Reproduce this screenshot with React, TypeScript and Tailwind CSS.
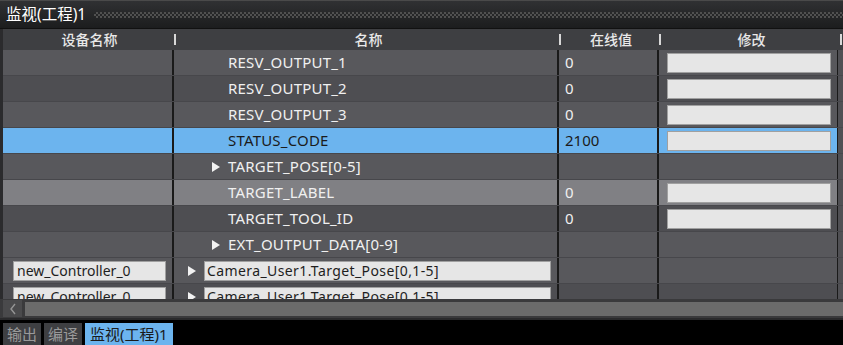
const font = "font-['Noto_Sans','Noto_Sans_CJK_SC',sans-serif]";

type Row = {
  name: string;
  value?: string;
  edit?: boolean;
  expand?: boolean;
  tone: "a" | "b" | "sel" | "hover";
};

const rows: Row[] = [
  { name: "RESV_OUTPUT_1", value: "0", edit: true, tone: "a" },
  { name: "RESV_OUTPUT_2", value: "0", edit: true, tone: "b" },
  { name: "RESV_OUTPUT_3", value: "0", edit: true, tone: "a" },
  { name: "STATUS_CODE", value: "2100", edit: true, tone: "sel" },
  { name: "TARGET_POSE[0-5]", expand: true, tone: "a" },
  { name: "TARGET_LABEL", value: "0", edit: true, tone: "hover" },
  { name: "TARGET_TOOL_ID", value: "0", edit: true, tone: "b" },
  { name: "EXT_OUTPUT_DATA[0-9]", expand: true, tone: "a" },
];

const toneBg = {
  a: "bg-[#58585c]",
  b: "bg-[#4e4e52]",
  sel: "bg-[#6cb4ee]",
  hover: "bg-[#808084]",
};

function Tri({ dark }: { dark?: boolean }) {
  return (
    <svg width="10" height="12" viewBox="0 0 10 12" className="shrink-0">
      <path d="M1 1 L9 6 L1 11 Z" fill={dark ? "#1b1b1b" : "#f2f2f2"} />
    </svg>
  );
}

function EditBox() {
  return <div className="h-[20px] ml-[8px] mr-[6px] bg-[#e6e6e6] border border-[#a0a0a0]" />;
}

function DataRow({ r }: { r: Row }) {
  const sel = r.tone === "sel";
  const txt = sel ? "text-[#1b1b1b]" : "text-[#f0f0f0]";
  return (
    <div className={`flex h-[26px] shrink-0 border-b border-[#47474b] text-[15px] ${toneBg[r.tone]} ${txt}`}>
      <div className="w-[171px] border-r-2 border-[#1a1a1a]" />
      <div className="w-[385px] flex items-center border-r-2 border-[#1a1a1a]">
        {r.expand ? (
          <div className="flex items-center gap-[7px] pl-[37px]">
            <Tri dark={sel} />
            <span className="tracking-[0.2px]">{r.name}</span>
          </div>
        ) : (
          <span className="pl-[54px] tracking-[0.2px]">{r.name}</span>
        )}
      </div>
      <div className="w-[100px] flex items-center pl-[6px] border-r-2 border-[#1a1a1a]">
        {r.value}
      </div>
      <div className="w-[179px] flex flex-col justify-center border-r border-[#1a1a1a]">
        {r.edit && <EditBox />}
      </div>
      <div className="flex-1 bg-[#505054]" />
    </div>
  );
}

function ControllerRow({ tone }: { tone: "a" | "b" }) {
  return (
    <div className={`flex h-[26px] shrink-0 border-b border-[#47474b] ${toneBg[tone]} text-[14px]`}>
      <div className="w-[171px] flex items-center pl-[10px] pr-[6px] border-r-2 border-[#1a1a1a]">
        <div className="flex-1 h-[20px] bg-[#e6e6e6] border border-[#a0a0a0] text-[#1e1e1e] pl-[3px] leading-[18px]">
          new_Controller_0
        </div>
      </div>
      <div className="w-[385px] flex items-center pl-[13px] gap-[7px] border-r-2 border-[#1a1a1a]">
        <Tri />
        <div className="flex-1 mr-[6px] h-[20px] bg-[#e6e6e6] border border-[#a0a0a0] text-[#1e1e1e] pl-[2px] leading-[18px] tracking-[0.4px]">
          Camera_User1.Target_Pose[0,1-5]
        </div>
      </div>
      <div className="w-[100px] border-r-2 border-[#1a1a1a]" />
      <div className="w-[179px] border-r border-[#1a1a1a]" />
      <div className="flex-1 bg-[#505054]" />
    </div>
  );
}

function HeaderCell({ w, label }: { w: string; label: string }) {
  return (
    <div className={`${w} relative flex items-center justify-center`}>
      <span>{label}</span>
      <div className="absolute right-0 top-[5px] w-[2px] h-[11px] bg-[#d8d8d8]" />
    </div>
  );
}

export default function App() {
  return (
    <div className={`w-[843px] h-[345px] overflow-hidden bg-black text-[14px] ${font}`}>
      {/* title bar */}
      <div className="h-[28px] flex items-center border-t border-[#4a4a4a] bg-gradient-to-b from-[#303133] to-[#1c1d1e]">
        <span className="pl-[6px] pr-[8px] text-white text-[15.5px] leading-none">监视(工程)1</span>
        <div className="flex-1 h-[6px] bg-[conic-gradient(#505050_25%,transparent_0_50%,#505050_0_75%,transparent_0)] bg-[length:4px_4px]" />
      </div>

      <div className="flex flex-col h-[292px] border-t border-[#111] bg-[#2b2b2d] pl-[3px]">
        {/* column headers */}
        <div className="flex h-[21px] shrink-0 bg-[#3e3f42] text-[#e8e8e8] font-medium">
          <HeaderCell w="w-[173px]" label="设备名称" />
          <HeaderCell w="w-[385px]" label="名称" />
          <HeaderCell w="w-[100px]" label="在线值" />
          <HeaderCell w="w-[181px]" label="修改" />
          <div className="flex-1" />
        </div>

        {/* body */}
        <div className="h-[249px] shrink-0 overflow-hidden flex flex-col">
          {rows.map((r) => (
            <DataRow key={r.name} r={r} />
          ))}
          <ControllerRow tone="a" />
          <ControllerRow tone="b" />
        </div>

        {/* horizontal scrollbar */}
        <div className="h-[21px] flex items-center gap-[3px] bg-[#3a3a3c] border-b-2 border-[#2a2a2c] -ml-[3px] pl-[3px]">
          <div className="w-[19px] h-[17px] flex items-center justify-center bg-[#4a4a4c]">
            <svg width="8" height="12" viewBox="0 0 8 12">
              <path d="M6 1 L2 6 L6 11" stroke="#959595" strokeWidth="1.4" fill="none" />
            </svg>
          </div>
          <div className="flex-1 h-[14px] bg-[#6b6b6b]" />
        </div>
      </div>

      {/* bottom tabs */}
      <div className="flex gap-[3px] pl-[3px] pt-[3px] h-[25px] text-[15px]">
        <div className="px-[4px] flex items-center bg-[#3e3f42] text-[#9a9a9a]">输出</div>
        <div className="px-[4px] flex items-center bg-[#3e3f42] text-[#9a9a9a]">编译</div>
        <div className="px-[5px] flex items-center bg-[#6cb4ee] text-[#1a1a1a]">监视(工程)1</div>
      </div>
    </div>
  );
}
